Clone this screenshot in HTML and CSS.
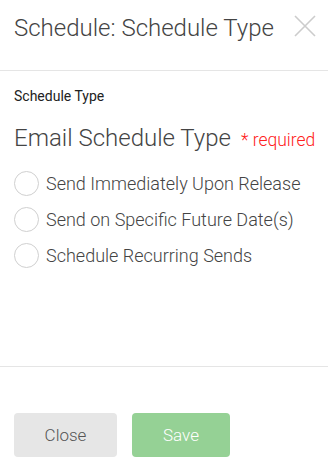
FILE: index.html
```html
<!DOCTYPE html>
<html lang="en">

<head>
    <meta charset="UTF-8">
    <meta name="viewport" content="width=device-width, initial-scale=1.0">
    <title>Schedule Type</title>
    <link rel="stylesheet" href="styles.css">
</head>

<body>
    <div class="modal">
        <div class="modal-header">
            <h2 class="modal-title">Schedule: Schedule Type</h2>
            <button class="close-x" aria-label="Close">
                <svg width="22" height="22" viewBox="0 0 22 22">
                    <path d="M1 1 L21 21 M21 1 L1 21" stroke="#cccccc" stroke-width="1.6" fill="none" />
                </svg>
            </button>
        </div>

        <div class="modal-body">
            <div class="field-label">Schedule Type</div>
            <div class="question">
                <span class="question-text">Email Schedule Type</span>
                <span class="required">* required</span>
            </div>
            <ul class="options">
                <li class="option"><span class="radio"></span>Send Immediately Upon Release</li>
                <li class="option"><span class="radio"></span>Send on Specific Future Date(s)</li>
                <li class="option"><span class="radio"></span>Schedule Recurring Sends</li>
            </ul>
        </div>

        <div class="modal-footer">
            <button class="btn btn-close">Close</button>
            <button class="btn btn-save">Save</button>
        </div>
    </div>
</body>

</html>
```

FILE: styles.css
```css
body {
    font-family: Roboto, "Liberation Sans", sans-serif;
    margin: 0;
    padding: 0;
    background-color: #fff;
}

.modal {
    width: 328px;
    height: 468px;
    display: flex;
    flex-direction: column;
}

.modal-header {
    height: 70px;
    display: flex;
    justify-content: space-between;
    align-items: flex-start;
    padding: 0 12px 0 14px;
    border-bottom: 1px solid #e5e5e5;
}

.modal-title {
    margin: 14px 0 0;
    font-size: 24px;
    font-weight: 300;
    color: #444;
}

.close-x {
    margin-top: 15px;
    padding: 0;
    border: none;
    background: none;
    cursor: pointer;
}

.modal-body {
    height: 296px;
    padding: 17px 0 0 14px;
    border-bottom: 1px solid #e5e5e5;
    box-sizing: border-box;
}

.field-label {
    font-size: 14px;
    color: #222;
}

.question {
    margin-top: 20px;
    display: flex;
    align-items: baseline;
    gap: 10px;
    white-space: nowrap;
}

.question-text {
    font-size: 24px;
    font-weight: 300;
    color: #444;
}

.required {
    font-size: 17.5px;
    font-weight: 300;
    color: #ff2020;
}

.options {
    list-style: none;
    margin: 13px 0 0;
    padding: 0;
}

.option {
    display: flex;
    align-items: center;
    height: 36px;
    font-size: 18px;
    font-weight: 300;
    color: #444;
    white-space: nowrap;
}

.radio {
    width: 23px;
    height: 23px;
    border: 1px solid #d0d0d0;
    border-radius: 50%;
    margin-right: 7px;
    flex-shrink: 0;
}

.modal-footer {
    display: flex;
    gap: 15px;
    padding: 46px 14px 0;
}

.btn {
    height: 44px;
    border: none;
    border-radius: 4px;
    font-family: Roboto, "Liberation Sans", sans-serif;
    font-size: 17px;
    font-weight: 300;
    cursor: pointer;
}

.btn-close {
    width: 103px;
    background-color: #e6e6e6;
    color: #555;
}

.btn-save {
    width: 98px;
    background-color: #95d195;
    color: #fff;
}
```
